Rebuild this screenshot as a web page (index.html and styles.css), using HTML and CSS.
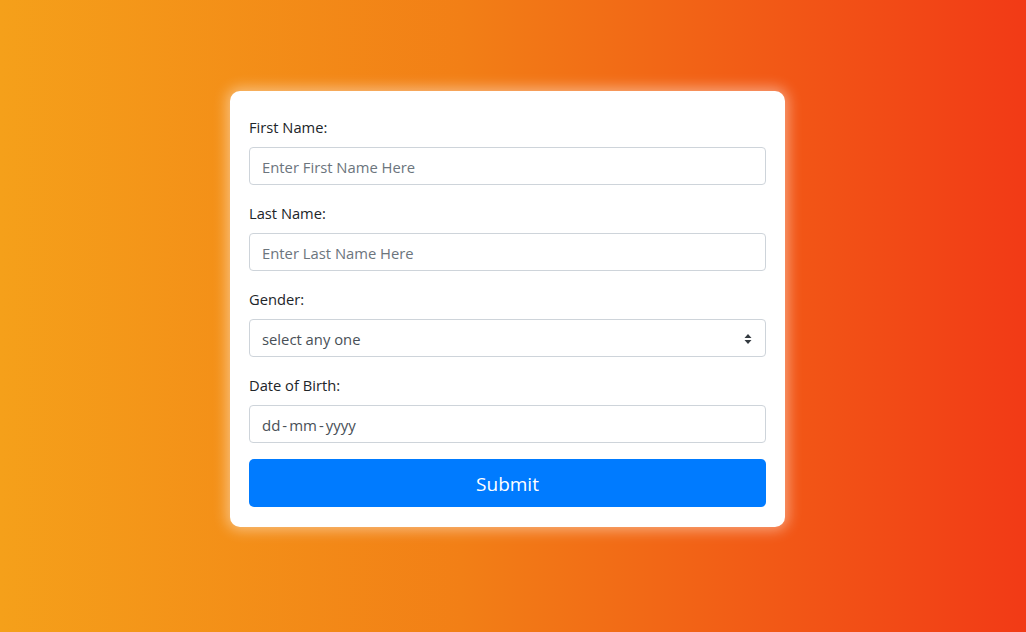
FILE: index.html
```html
<!DOCTYPE html>
<html lang="en">
<head>
<meta charset="utf-8">
<title>Form</title>
<link rel="stylesheet" href="styles.css">
</head>
<body>
<div class="page">
  <form class="card">
    <div class="group">
      <label class="label" for="fn">First Name:</label>
      <input class="control" id="fn" type="text" placeholder="Enter First Name Here">
    </div>
    <div class="group">
      <label class="label" for="ln">Last Name:</label>
      <input class="control" id="ln" type="text" placeholder="Enter Last Name Here">
    </div>
    <div class="group">
      <label class="label" for="gd">Gender:</label>
      <div class="select">
        <span>select any one</span>
        <svg class="arrows" width="8" height="10" viewBox="0 0 8 10"><path d="M4 0L7.5 4H0.5Z M4 10L0.5 6H7.5Z" fill="#343a40"/></svg>
      </div>
    </div>
    <div class="group">
      <label class="label" for="db">Date of Birth:</label>
      <div class="control date">dd<span class="dash">-</span>mm<span class="dash">-</span>yyyy</div>
    </div>
    <button class="btn" type="button">Submit</button>
  </form>
</div>
</body>
</html>
```
FILE: styles.css
```css
* { box-sizing: border-box; }
html, body { margin: 0; height: 100%; }
body {
  background: linear-gradient(to right, #f5a01a 0%, #f27f16 45%, #f23a16 100%);
  font-family: "Open Sans", "Noto Sans", "Liberation Sans", sans-serif;
  color: #212529;
}
.page {
  padding: 91px 0 0 230px;
}
.card {
  width: 555px;
  background: #fff;
  border-radius: 10px;
  padding: 24px 19px 20px;
  box-shadow: 0 0 14px 3px rgba(255, 255, 255, 0.45);
}
.group { margin-bottom: 16px; }
.label {
  display: block;
  font-size: 14.7px;
  line-height: 24px;
  height: 24px;
  margin-bottom: 8px;
  color: #212529;
}
.control, .select {
  display: block;
  width: 100%;
  height: 38px;
  padding: 1px 12px 0;
  border: 1px solid #ced4da;
  border-radius: 4px;
  font-family: inherit;
  font-size: 14.8px;
  color: #495057;
  background: #fff;
  outline: none;
}
.control::placeholder { color: #6c757d; }
.select {
  display: flex;
  align-items: center;
  justify-content: space-between;
  padding-right: 13px;
}
.date {
  display: flex;
  align-items: center;
  font-size: 15px;
}
.dash { margin: 0 2px; }
.btn {
  display: block;
  width: 100%;
  height: 48px;
  border: none;
  border-radius: 5px;
  background: #007bff;
  color: #fff;
  font-family: inherit;
  font-size: 19px;
  padding-top: 2px;
  cursor: pointer;
}
```
